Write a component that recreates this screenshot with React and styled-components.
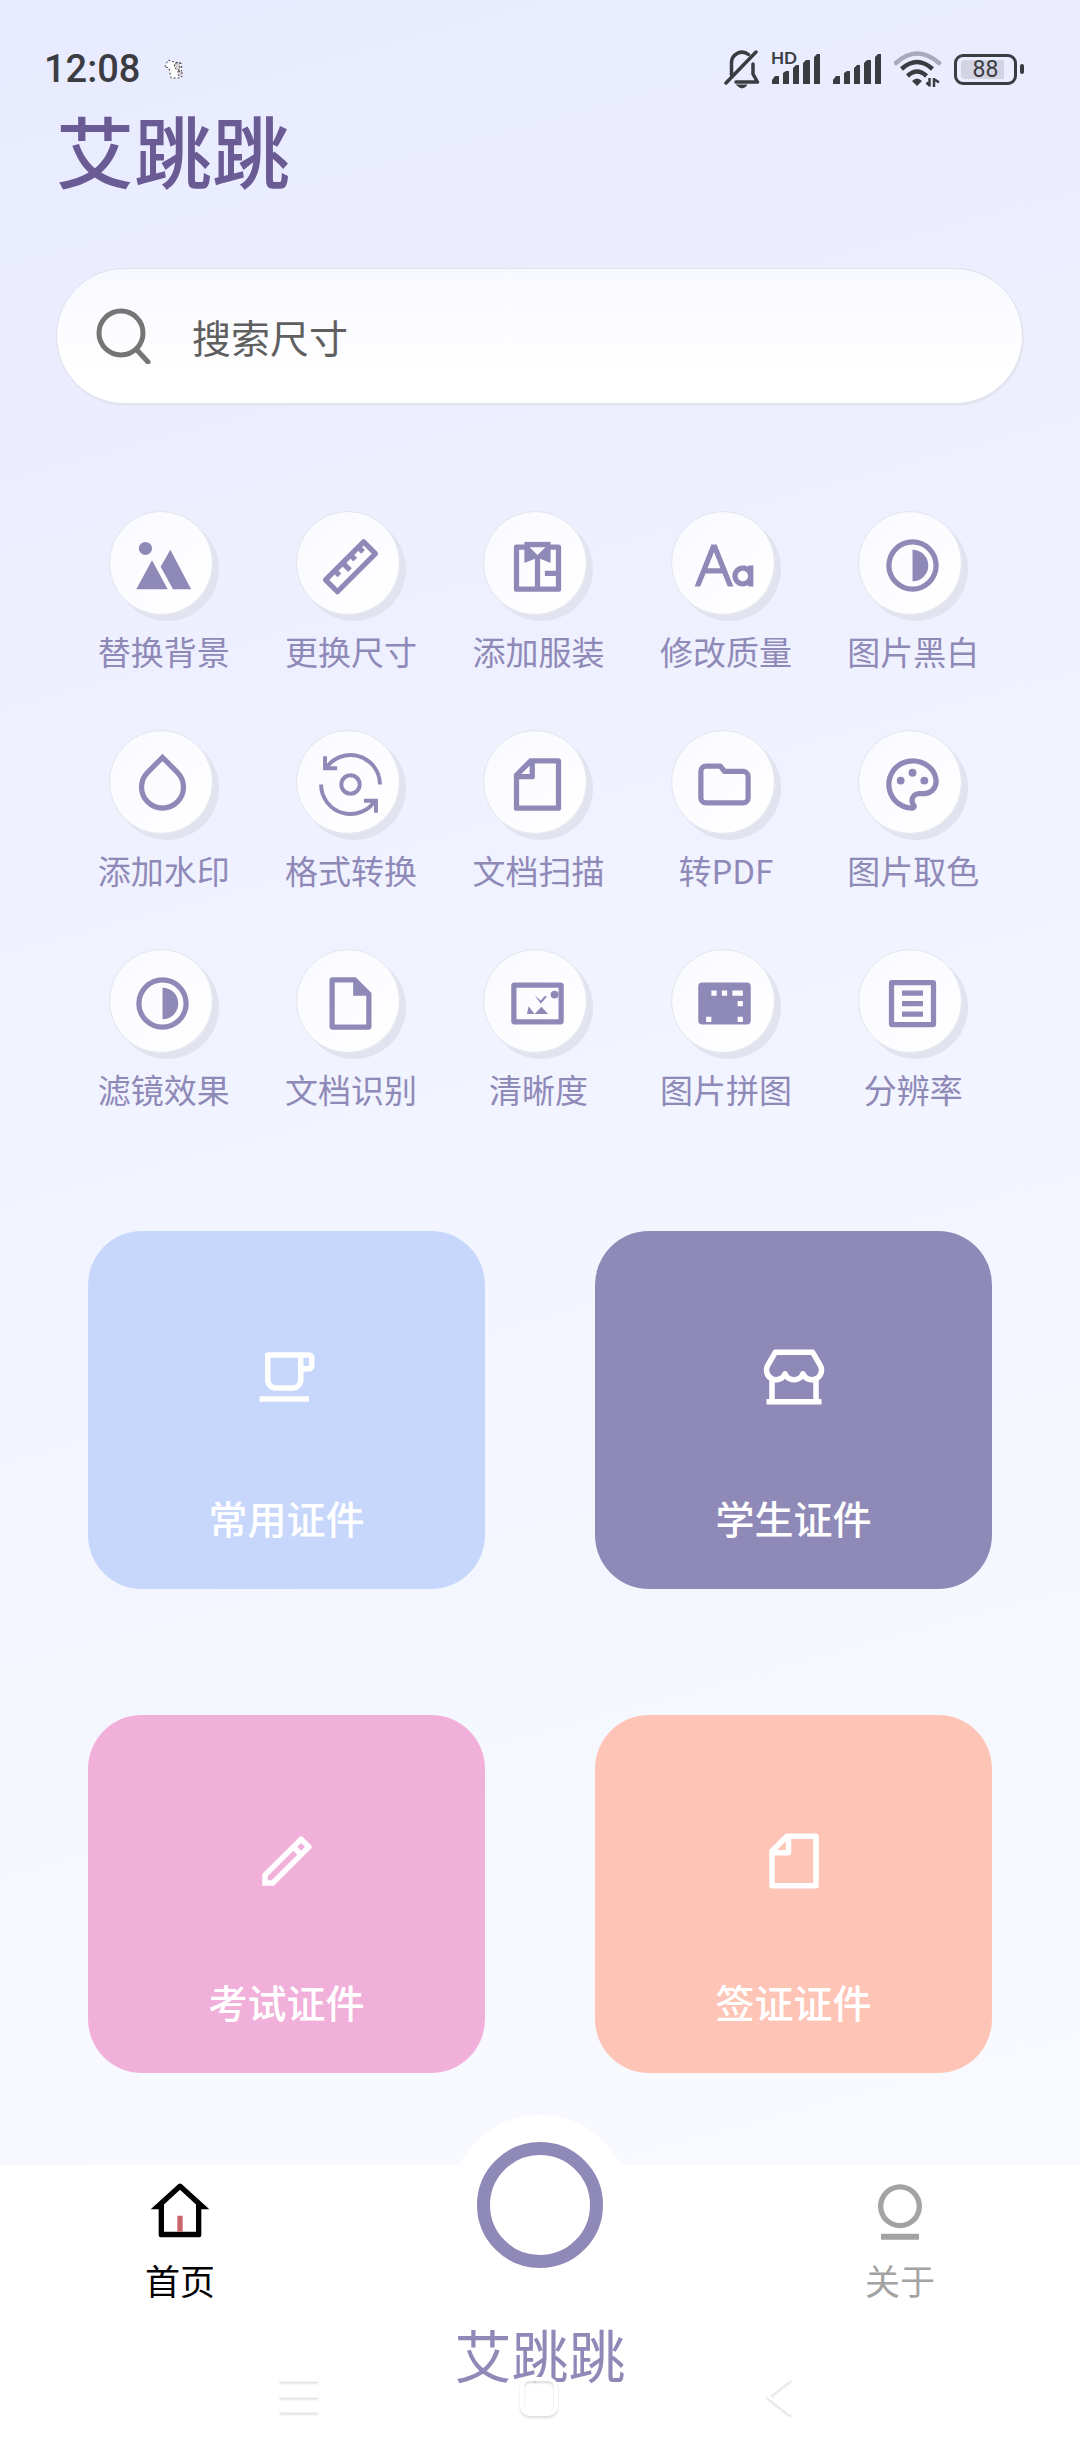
import React from "react";
import styled, { createGlobalStyle } from "styled-components";
import { RiFontSize } from "react-icons/ri";

const colors = {
  violet: "#8f89b8",
  title: "#6b5b95",
  ink: "#3b3c42",
  muted: "#a3a3a3",
};

const GlobalStyle = createGlobalStyle`
  * { box-sizing: border-box; }
  body {
    margin: 0;
    font-family: "Noto Sans CJK SC", "Noto Sans", sans-serif;
  }
  button, input {
    font-family: inherit;
    border: 0;
    padding: 0;
    background: none;
  }
  button { cursor: pointer; }
`;

const Page = styled.div`
  min-height: 100vh;
  display: flex;
  flex-direction: column;
  background: linear-gradient(165deg, #e8eaff 0%, #edefff 22%, #f2f4ff 48%, #f6f8ff 70%, #f9faff 90%);
`;

const StatusBar = styled.div`
  display: flex;
  align-items: center;
  justify-content: space-between;
  height: 40px;
  margin-top: 49px;
  padding: 0 56px 0 44px;
  color: ${colors.ink};
`;

const StatusGroup = styled.div`
  display: flex;
  align-items: center;
  gap: ${(p) => p.$gap}px;
`;

const Clock = styled.span`
  font-family: Roboto, sans-serif;
  font-size: 38px;
  font-weight: 500;
  line-height: 40px;
`;

const SignalBox = styled.span`
  position: relative;
  display: flex;
`;

const HdMark = styled.span`
  position: absolute;
  left: -1px;
  top: -4px;
  font-family: Lato, sans-serif;
  font-size: 17px;
  font-weight: 700;
  line-height: 16px;
`;

const BatteryBox = styled.span`
  display: flex;
  align-items: center;
  gap: 3px;
  width: 70px;
`;

const BatteryShell = styled.span`
  display: flex;
  width: 63px;
  height: 31px;
  padding: 3px 4px;
  border: 3px solid ${colors.ink};
  border-radius: 9px;
`;

const BatteryLevel = styled.span`
  flex: 1;
  border-radius: 4px;
  background: linear-gradient(90deg, #d2d4e3 88%, transparent 88%);
  font-family: Roboto, sans-serif;
  font-size: 23px;
  font-weight: 400;
  line-height: 19px;
  text-align: center;
`;

const BatteryTip = styled.span`
  width: 4px;
  height: 10px;
  border-radius: 2px;
  background: ${colors.ink};
`;

const Title = styled.h1`
  margin: 20px 56px 0;
  color: ${colors.title};
  font-size: 78px;
  font-weight: 500;
  line-height: 80px;
`;

const SearchBar = styled.form`
  display: flex;
  align-items: center;
  gap: 40px;
  height: 136px;
  margin: 79px 57px 0 56px;
  padding: 0 39px;
  border: 1px solid #dfe0ea;
  border-radius: 68px;
  background: linear-gradient(180deg, #f8f9ff, #ffffff 80%);
  box-shadow: 1px 2px 1px #e3e5f1;
`;

const SearchInput = styled.input`
  flex: 1;
  min-width: 0;
  height: 60px;
  outline: none;
  color: #5f5f5f;
  font-size: 39px;
  &::placeholder { color: #5f5f5f; opacity: 1; }
`;

const ToolGrid = styled.section`
  display: grid;
  grid-template-columns: repeat(5, 1fr);
  row-gap: 59px;
  margin: 107px 73px 0 70px;
`;

const Tool = styled.button`
  display: flex;
  flex-direction: column;
  align-items: center;
  gap: 16px;
  color: ${colors.violet};
`;

const ToolDisc = styled.span`
  display: grid;
  place-items: center;
  width: 104px;
  height: 104px;
  margin-right: 6px;
  padding: 4px 0 0 4px;
  border: 1px solid #e4e5ec;
  border-radius: 50%;
  background: linear-gradient(135deg, #f9faff, #ffffff);
  box-shadow: 6px 6px 0 #e1e3ee;
`;

const ToolLabel = styled.span`
  font-size: 33px;
  line-height: 40px;
  white-space: nowrap;
`;

const CardGrid = styled.section`
  display: grid;
  grid-template-columns: 1fr 1fr;
  gap: 126px 110px;
  margin: 122px 88px 92px;
`;

const Card = styled.button`
  display: flex;
  flex-direction: column;
  align-items: center;
  gap: 82px;
  padding: 113px 0 47px;
  border-radius: 54px;
  background: ${(p) => p.$tone};
  color: #ffffff;
`;

const CardLabel = styled.span`
  font-size: 39px;
  font-weight: 500;
  line-height: 50px;
`;

const TabBar = styled.nav`
  position: relative;
  display: grid;
  grid-template-columns: repeat(3, 1fr);
  align-items: start;
  min-height: 295px;
  margin-top: auto;
  background: #ffffff;
`;

const Tab = styled.a`
  display: flex;
  flex-direction: column;
  align-items: center;
  gap: 16px;
  padding-top: 15px;
  color: ${(p) => (p.$active ? "#000000" : colors.muted)};
  font-size: 35px;
  line-height: 40px;
  text-decoration: none;
`;

const CenterTab = styled.a`
  display: flex;
  flex-direction: column;
  align-items: center;
  gap: 28px;
  margin-top: -50px;
  color: ${colors.violet};
  font-size: 57px;
  line-height: 60px;
  text-decoration: none;
`;

const Bump = styled.span`
  display: grid;
  place-items: center;
  width: 180px;
  height: 180px;
  border-radius: 50%;
  background: #ffffff;
`;

const Ring = styled.span`
  width: 126px;
  height: 126px;
  border: 13px solid ${colors.violet};
  border-radius: 50%;
`;

const SystemKeys = styled.div`
  position: absolute;
  left: 0;
  right: 0;
  bottom: 40px;
  display: grid;
  grid-template-columns: repeat(3, 1fr);
  justify-items: center;
  padding: 0 181px 0 179px;
`;

const SystemKey = styled.button`
  display: flex;
  filter: drop-shadow(0 2px 1px #dcdcdc);
`;

function Glyph({ size = 63, children }) {
  return (
    <svg width={size} height={size} viewBox="0 0 24 24" fill="currentColor" fillRule="evenodd" aria-hidden="true">
      {children}
    </svg>
  );
}

const glyphs = {
  landscape: (
    <>
      <circle cx="5.5" cy="5.5" r="2.5" />
      <path d="M2 21 8 10l6 11ZM15 6l7.9 15H16l-4.7-8.5Z" />
    </>
  ),
  ruler: (
    <g transform="translate(0 .5)" fill="none" stroke="currentColor" strokeWidth="2" strokeLinejoin="round">
      <path d="M17 2.5 21.5 7 7 21.5 2.5 17Z" />
      <path d="M6 13.5l1.8 1.8M9 10.5l2.8 2.8M12 7.5l1.8 1.8M15 4.5l1.8 1.8" />
    </g>
  ),
  shirt: (
    <>
      <path d="M4 4h16a1 1 0 0 1 1 1v16a1 1 0 0 1-1 1H4a1 1 0 0 1-1-1V5a1 1 0 0 1 1-1ZM5 6v14h6V9.4L7 11V6Zm8 3.4V20h6v-4h-4.2v-2H19V6h-2v5Z" />
      <path d="M7 3h10v2H7Z" />
      <path fill="#fcfcff" d="M9 5h6l-3 3Z" />
    </>
  ),
  contrast: (
    <path d="M12 2a10 10 0 1 1 0 20 10 10 0 0 1 0-20Zm0 2a8 8 0 1 0 0 16 8 8 0 0 0 0-16Zm0 2a6 6 0 0 1 0 12Z" />
  ),
  drop: (
    <path d="M12 3.1 7.05 8.05a7 7 0 1 0 9.9 0L12 3.1zm0-2.83 6.364 6.366a9 9 0 1 1-12.728 0L12 .27z" />
  ),
  convert: (
    <g fill="none" stroke="currentColor" strokeWidth="1.5">
      <circle cx="12" cy="12" r="3.5" />
      <path d="M23.2 12A11.2 11.2 0 0 0 2.4 6.2M2.3 1.2v4.6h4.6M.8 12a11.2 11.2 0 0 0 20.8 5.8M21.7 22.8v-4.6h-4.6" />
    </g>
  ),
  file: (
    <path d="M9 2.003V2h10.998C20.55 2 21 2.455 21 2.992v18.016a.993.993 0 0 1-.993.992H3.993A1 1 0 0 1 3 20.993V8l6-5.997zM5.83 8H9V4.83L5.83 8zM11 4v5a1 1 0 0 1-1 1H5v10h14V4h-8z" />
  ),
  folder: (
    <path
      fill="none"
      stroke="currentColor"
      strokeWidth="2"
      strokeLinejoin="round"
      d="M10.4 5H5a2 2 0 0 0-2 2v10a2 2 0 0 0 2 2h14a2 2 0 0 0 2-2V9a2 2 0 0 0-2-2h-7Z"
    />
  ),
  palette: (
    <path d="M12 2c5.522 0 10 3.978 10 8.889a5.558 5.558 0 0 1-5.556 5.555h-1.966c-.922 0-1.667.745-1.667 1.667 0 .422.167.811.422 1.1.267.3.434.689.434 1.122C13.667 21.256 12.9 22 12 22 6.478 22 2 17.522 2 12S6.478 2 12 2zm-1.189 16.111a3.664 3.664 0 0 1 3.667-3.667h1.966A3.558 3.558 0 0 0 20 10.89C20 7.139 16.468 4 12 4a8 8 0 0 0-.676 15.972 3.648 3.648 0 0 1-.513-1.86zM7.5 12a1.5 1.5 0 1 1 0-3 1.5 1.5 0 0 1 0 3zm9 0a1.5 1.5 0 1 1 0-3 1.5 1.5 0 0 1 0 3zM12 9a1.5 1.5 0 1 1 0-3 1.5 1.5 0 0 1 0 3z" />
  ),
  page: (
    <path d="M5.2 2H14l6 6v12.8a1.2 1.2 0 0 1-1.2 1.2H5.2A1.2 1.2 0 0 1 4 20.8V3.2A1.2 1.2 0 0 1 5.2 2ZM6 4v16h12V9h-5V4Z" />
  ),
  clarity: (
    <>
      <path d="M3.2 4h17.6A1.2 1.2 0 0 1 22 5.2v13.6a1.2 1.2 0 0 1-1.2 1.2H3.2A1.2 1.2 0 0 1 2 18.8V5.2A1.2 1.2 0 0 1 3.2 4ZM4 6v12h16V6Z" />
      <circle cx="18.5" cy="8.6" r="1.5" />
      <path d="m11 9 2.3 1.9 1.3-1.7h1.1l-2.4 2.9ZM8.6 13 8 16h2.9ZM13.5 13.2 10.9 16H16Z" />
    </>
  ),
  collage: (
    <path d="M3.5 4h17A1.5 1.5 0 0 1 22 5.5v13a1.5 1.5 0 0 1-1.5 1.5h-17A1.5 1.5 0 0 1 2 18.5v-13A1.5 1.5 0 0 1 3.5 4ZM7 7v2h2V7Zm4 0v2h2V7Zm4 0v2h4V7Zm2 4v2h2v-2ZM5 17v2h2v-2Zm12 0v2h2v-2Z" />
  ),
  list: (
    <path d="M4.2 3h15.6A1.2 1.2 0 0 1 21 4.2v15.6a1.2 1.2 0 0 1-1.2 1.2H4.2A1.2 1.2 0 0 1 3 19.8V4.2A1.2 1.2 0 0 1 4.2 3ZM5 5v14h14V5Zm3 2h8v2H8Zm0 4h8v2H8Zm0 4h8v2H8Z" />
  ),
  cup: (
    <path d="M5 3h15a2 2 0 0 1 2 2v3a2 2 0 0 1-2 2h-2v3a4 4 0 0 1-4 4H8a4 4 0 0 1-4-4V4a1 1 0 0 1 1-1zm1 2v8a2 2 0 0 0 2 2h6a2 2 0 0 0 2-2V5H6zm12 0v3h2V5h-2zM2 19h18v2H2v-2z" />
  ),
  store: (
    <path d="M21 13.242V20h1v2H2v-2h1v-6.758A4.496 4.496 0 0 1 1 9.5c0-.827.224-1.624.633-2.303L4.345 2.5a1 1 0 0 1 .866-.5H18.79a1 1 0 0 1 .866.5l2.702 4.682A4.496 4.496 0 0 1 21 13.242zm-2 .73a4.496 4.496 0 0 1-3.75-1.36A4.496 4.496 0 0 1 12 14.001a4.496 4.496 0 0 1-3.25-1.387A4.496 4.496 0 0 1 5 13.973V20h14v-6.027zM5.789 4 3.356 8.213a2.5 2.5 0 1 0 4.466 2.216c.335-.837 1.52-.837 1.856 0a2.5 2.5 0 0 0 4.644 0c.335-.837 1.52-.837 1.856 0a2.5 2.5 0 1 0 4.457-2.232L18.21 4H5.79z" />
  ),
  pencil: (
    <path d="m15.728 9.686-1.414-1.414L5 17.586V19h1.414l9.314-9.314zm1.414-1.414 1.414-1.414-1.414-1.414-1.414 1.414 1.414 1.414zM7.242 21H3v-4.243L16.435 3.322a1 1 0 0 1 1.414 0l2.829 2.829a1 1 0 0 1 0 1.414L7.243 21z" />
  ),
  home: (
    <>
      <path d="M19 21.5H5a1 1 0 0 1-1-1V11H1l10.327-9.388a1 1 0 0 1 1.346 0L23 11h-3v9.5a1 1 0 0 1-1 1zM6 19.4h12V9.157l-6-5.454-6 5.454Z" />
      <path fill="#c9666a" d="M11 13.4h2v6h-2Z" />
    </>
  ),
  about: (
    <>
      <path d="M12 1.6a8.25 8.25 0 1 1 0 16.5 8.25 8.25 0 0 1 0-16.5Zm0 2a6.25 6.25 0 1 0 0 12.5 6.25 6.25 0 0 0 0-12.5Z" />
      <path d="M4.9 20.2h14.2v2.2H4.9Z" />
    </>
  ),
};

const tools = [
  ["landscape", "替换背景"],
  ["ruler", "更换尺寸"],
  ["shirt", "添加服装"],
  ["font", "修改质量"],
  ["contrast", "图片黑白"],
  ["drop", "添加水印"],
  ["convert", "格式转换"],
  ["file", "文档扫描"],
  ["folder", "转PDF"],
  ["palette", "图片取色"],
  ["contrast", "滤镜效果"],
  ["page", "文档识别"],
  ["clarity", "清晰度"],
  ["collage", "图片拼图"],
  ["list", "分辨率"],
];

const cards = [
  ["cup", "常用证件", "#c7d7fb"],
  ["store", "学生证件", "#8f89b7"],
  ["pencil", "考试证件", "#f1b0da"],
  ["file", "签证证件", "#fec5b7"],
];

function SignalBars() {
  return (
    <svg width="49" height="30" viewBox="0 0 49 30" fill="currentColor" aria-hidden="true">
      <path d="M0 30v-4l3-4h4v8ZM11 30V19l3-2h3v13ZM21 30V14l3-3h3v19ZM31 30V9l3-3h4v24ZM42 30V3l3-3h3v30Z" />
    </svg>
  );
}

function StatusIcons() {
  return (
    <StatusGroup $gap={12}>
      <svg width="36" height="40" viewBox="0 0 36 40" fill="none" stroke="currentColor" strokeWidth="3.5" strokeLinecap="round" strokeLinejoin="round" aria-hidden="true">
        <path d="M2 34 32 3M7.5 26V14a10.5 10.5 0 0 1 17-8.5M29 15v10l4.500 8H12" />
        <path d="M13 36h10q-5 6-10 0Z" fill="currentColor" strokeWidth="1" />
      </svg>
      <SignalBox>
        <HdMark>HD</HdMark>
        <SignalBars />
      </SignalBox>
      <SignalBars />
      <svg width="48" height="36" viewBox="0 0 48 36" fill="none" stroke="currentColor" strokeWidth="4.5" aria-hidden="true">
        <path d="M2 12q21-19 43 0" stroke="#a9abba" strokeLinecap="round" />
        <path d="M7.5 18q15.500-14 31 0M13.500 25q9.500-9 19 0" />
        <path d="M18 30q5-5 10 0l-5 5Z" fill="currentColor" stroke="none" />
        <path d="M35.500 27v8.500M32.500 31.500l3 3M40 36v-9M40 28l5 3.500" strokeWidth="2.500" />
      </svg>
      <BatteryBox>
        <BatteryShell>
          <BatteryLevel>88</BatteryLevel>
        </BatteryShell>
        <BatteryTip />
      </BatteryBox>
    </StatusGroup>
  );
}

function NotificationMark() {
  return (
    <svg width="20" height="20" viewBox="0 0 20 20" aria-hidden="true">
      <path d="M1 8 4 1l6 2 7 1 1 6-3 9H7L5 9Z" fill="#ffffff" stroke="#45464c" strokeWidth="1" strokeDasharray="2 2" />
      <path d="M11 4h5v7h-3l-3-3ZM14 12l4 1v5l-4-2Z" fill="#d5d0cf" stroke="#45464c" strokeWidth="1" strokeDasharray="2 2" />
    </svg>
  );
}

export default function App() {
  return (
    <Page>
      <GlobalStyle />
      <StatusBar>
        <StatusGroup $gap={24}>
          <Clock>12:08</Clock>
          <NotificationMark />
        </StatusGroup>
        <StatusIcons />
      </StatusBar>

      <Title>艾跳跳</Title>

      <SearchBar role="search" onSubmit={(e) => e.preventDefault()}>
        <svg width="56" height="56" viewBox="0 0 56 56" fill="none" stroke="#757575" strokeWidth="5" strokeLinecap="round" aria-hidden="true">
          <circle cx="25" cy="25" r="22" />
          <path d="m41 42 11 12" />
        </svg>
        <SearchInput type="text" placeholder="搜索尺寸" aria-label="搜索尺寸" />
      </SearchBar>

      <ToolGrid>
        {tools.map(([icon, label]) => (
          <Tool key={label} type="button">
            <ToolDisc>{icon === "font" ? <RiFontSize size={63} /> : <Glyph>{glyphs[icon]}</Glyph>}</ToolDisc>
            <ToolLabel>{label}</ToolLabel>
          </Tool>
        ))}
      </ToolGrid>

      <CardGrid>
        {cards.map(([icon, label, tone]) => (
          <Card key={label} type="button" $tone={tone}>
            <Glyph size={66}>{glyphs[icon]}</Glyph>
            <CardLabel>{label}</CardLabel>
          </Card>
        ))}
      </CardGrid>

      <TabBar>
        <Tab href="#home" $active>
          <Glyph size={64}>{glyphs.home}</Glyph>
          首页
        </Tab>
        <CenterTab href="#main">
          <Bump>
            <Ring />
          </Bump>
          艾跳跳
        </CenterTab>
        <Tab href="#about">
          <Glyph size={64}>{glyphs.about}</Glyph>
          关于
        </Tab>
        <SystemKeys>
          <SystemKey type="button" aria-label="菜单">
            <svg width="40" height="44" viewBox="0 0 40 44" stroke="#ffffff" strokeWidth="3" aria-hidden="true">
              <path d="M1 4h38M1 20h38M1 35h38" />
            </svg>
          </SystemKey>
          <SystemKey type="button" aria-label="主屏幕">
            <svg width="40" height="44" viewBox="0 0 40 44" fill="none" stroke="#ffffff" strokeWidth="4" aria-hidden="true">
              <rect x="3" y="3" width="34" height="35" rx="8" />
            </svg>
          </SystemKey>
          <SystemKey type="button" aria-label="返回">
            <svg width="28" height="44" viewBox="0 0 28 44" fill="none" stroke="#ffffff" strokeWidth="3" aria-hidden="true">
              <path d="M26 2 3 20l23 18" />
            </svg>
          </SystemKey>
        </SystemKeys>
      </TabBar>
    </Page>
  );
}
